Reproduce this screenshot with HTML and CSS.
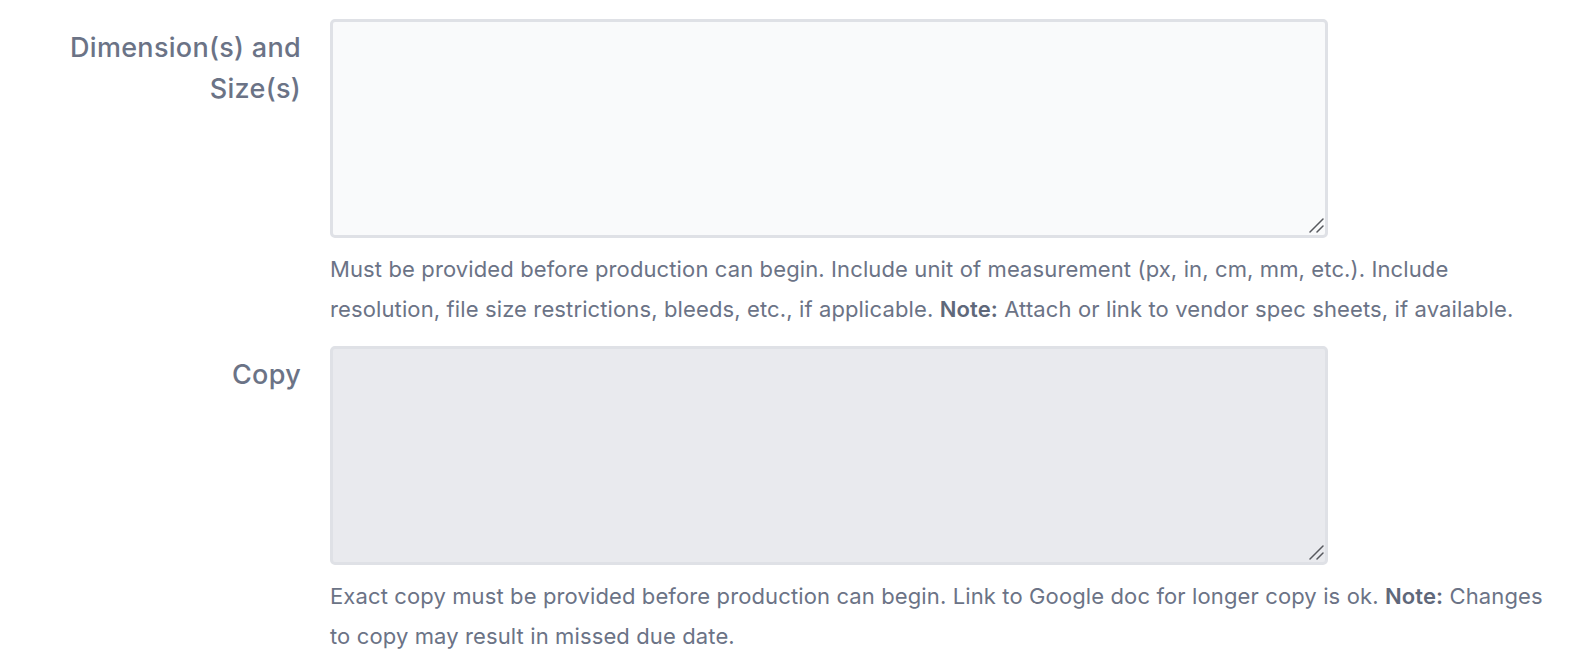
FILE: index.html
```html
<!DOCTYPE html>
<html lang="en">
<head>
<meta charset="utf-8">
<title>Form</title>
<link rel="stylesheet" href="styles.css">
</head>
<body>
<form class="form">
  <div class="row">
    <label class="label" for="dims">Dimension(s) and Size(s)</label>
    <div class="field">
      <div class="control">
        <textarea id="dims" class="input"></textarea>
        <svg class="grip" width="16" height="16" viewBox="0 0 16 16" aria-hidden="true"><path d="M2 15 L15 2 M9 15 L15 9" stroke="#57595e" stroke-width="1.5" stroke-linecap="round" fill="none"/></svg>
      </div>
      <p class="help">Must be provided before production can begin. Include unit of measurement (px, in, cm, mm, etc.). Include resolution, file size restrictions, bleeds, etc., if applicable. <strong>Note:</strong> Attach or link to vendor spec sheets, if available.</p>
    </div>
  </div>
  <div class="row">
    <label class="label" for="copy">Copy</label>
    <div class="field">
      <div class="control">
        <textarea id="copy" class="input input-muted"></textarea>
        <svg class="grip" width="16" height="16" viewBox="0 0 16 16" aria-hidden="true"><path d="M2 15 L15 2 M9 15 L15 9" stroke="#57595e" stroke-width="1.5" stroke-linecap="round" fill="none"/></svg>
      </div>
      <p class="help">Exact copy must be provided before production can begin. Link to Google doc for longer copy is ok. <strong>Note:</strong> Changes to copy may result in missed due date.</p>
    </div>
  </div>
</form>
</body>
</html>
```

FILE: styles.css
```css
html, body {
  margin: 0;
  padding: 0;
  background: #ffffff;
}

body {
  font-family: Inter, "Noto Sans", "Liberation Sans", sans-serif;
  color: #6b7386;
}

.form {
  display: flex;
  flex-direction: column;
  gap: 17px;
  padding-top: 19px;
}

.row {
  display: grid;
  grid-template-columns: 301px 1fr;
  column-gap: 29px;
}

.label {
  text-align: right;
  font-size: 27px;
  letter-spacing: 0.3px;
  line-height: 41px;
  padding-top: 8px;
  font-weight: 500;
  color: #6b7386;
}

.field {
  display: flex;
  flex-direction: column;
}

.control {
  position: relative;
  width: 998px;
  height: 219px;
}

.input {
  display: block;
  box-sizing: border-box;
  width: 100%;
  height: 100%;
  margin: 0;
  border: 3px solid #dfe1e6;
  border-radius: 5px;
  background: #f9fafb;
  resize: none;
  font: inherit;
}

.input-muted {
  background: #e9eaee;
}

.grip {
  position: absolute;
  right: 4px;
  bottom: 5px;
  pointer-events: none;
}

.help {
  margin: 11px 0 0;
  width: 1215px;
  font-size: 22px;
  letter-spacing: 0.12px;
  line-height: 40px;
  color: #6b7386;
}

.help strong {
  font-weight: 600;
  color: #5f687a;
}
```
